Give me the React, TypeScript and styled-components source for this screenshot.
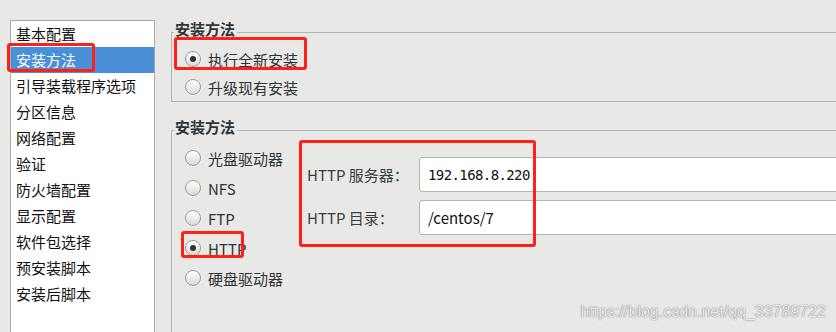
import React from "react";
import styled, { createGlobalStyle } from "styled-components";

const FONT = `"Noto Sans CJK SC", "Noto Sans", sans-serif`;

const GlobalStyle = createGlobalStyle`
  html, body {
    margin: 0;
    padding: 0;
    background: #e8e8e7;
  }
  body {
    font-family: ${FONT};
  }
`;

const Window = styled.div`
  position: relative;
  display: flex;
  align-items: flex-start;
  width: 836px;
  height: 332px;
  overflow: hidden;
  background: #e8e8e7;
  color: #2e3436;
  font-family: ${FONT};
  font-size: 15px;
`;

const Sidebar = styled.ul`
  flex: 0 0 145px;
  box-sizing: border-box;
  height: 330px;
  margin: 20px 0 0 10px;
  padding: 0;
  list-style: none;
  background: #fff;
  border: 1px solid #a9a9a9;
`;

const NavItem = styled.li<{ $active?: boolean }>`
  position: relative;
  height: 26px;
  line-height: 26px;
  padding-left: 5px;
  white-space: nowrap;
  color: ${(p) => (p.$active ? "#fff" : "#111")};
  background: ${(p) => (p.$active ? "#4a90d9" : "transparent")};
`;

const Main = styled.div`
  flex: 1;
  display: flex;
  flex-direction: column;
  gap: 16px;
  margin: 20px -40px 0 16px;
`;

const Frame = styled.fieldset<{ $height?: number }>`
  margin: 0;
  padding: 0;
  min-width: 0;
  border: 1px solid #b4b4b4;
  ${(p) => (p.$height ? `height: ${p.$height}px;` : "")}
`;

const FrameTitle = styled.legend`
  margin-left: 2px;
  padding: 0 2px 6px 1px;
  line-height: 18px;
  font-size: 15px;
  font-weight: bold;
  color: #2e3436;
`;

const ChoiceList = styled.div<{ $width?: number }>`
  display: flex;
  flex-direction: column;
  padding-top: 1px;
  ${(p) => (p.$width ? `flex: 0 0 ${p.$width}px;` : "")}
`;

const Choice = styled.label<{ $h: number }>`
  position: relative;
  display: flex;
  align-items: center;
  gap: 7px;
  height: ${(p) => p.$h}px;
  padding-left: 13px;
  white-space: nowrap;
  color: #2e3436;
`;

const RadioDot = styled.span<{ $on?: boolean }>`
  box-sizing: border-box;
  display: flex;
  align-items: center;
  justify-content: center;
  width: 16px;
  height: 16px;
  border-radius: 50%;
  border: 1px solid #9a9a9a;
  background: linear-gradient(#ffffff, #dadada);
  box-shadow: inset 0 1px 0 #fff, 0 1px 0 rgba(255, 255, 255, 0.6);
  &::after {
    content: "";
    display: ${(p) => (p.$on ? "block" : "none")};
    width: 6px;
    height: 6px;
    border-radius: 50%;
    background: #2e3436;
  }
`;

const FrameBody = styled.div`
  display: flex;
  align-items: flex-start;
`;

const Form = styled.div`
  position: relative;
  flex: 1;
  display: grid;
  grid-template-columns: 112px 1fr;
  row-gap: 8px;
  align-items: center;
  margin-top: 15px;
`;

const FieldLabel = styled.span`
  color: #3a3d3e;
  white-space: nowrap;
`;

const Field = styled.div<{ $mono?: boolean }>`
  box-sizing: border-box;
  display: flex;
  align-items: center;
  height: 35px;
  padding-left: 8px;
  background: #fff;
  border: 1px solid #b5b5b5;
  border-radius: 3px;
  color: #111;
  font-family: ${(p) => (p.$mono ? `"DejaVu Sans Mono", monospace` : FONT)};
  font-size: ${(p) => (p.$mono ? "14px" : "15px")};
  letter-spacing: ${(p) => (p.$mono ? "-0.6px" : "normal")};
`;

const Mark = styled.span<{ $l: number; $t: number; $w: number; $h: number }>`
  position: absolute;
  left: ${(p) => p.$l}px;
  top: ${(p) => p.$t}px;
  width: ${(p) => p.$w}px;
  height: ${(p) => p.$h}px;
  box-sizing: border-box;
  border: 3px solid #ff2119;
  border-radius: 3px;
  pointer-events: none;
`;

const Watermark = styled.div`
  position: absolute;
  right: 10px;
  bottom: 11px;
  font-family: "Liberation Sans", Arial, sans-serif;
  font-size: 16px;
  line-height: 18px;
  color: rgba(255, 255, 255, 0.85);
  text-shadow: 0 0 1px rgba(0, 0, 0, 0.5), 0 0 2px rgba(0, 0, 0, 0.2);
`;

const navItems = [
  "基本配置",
  "安装方法",
  "引导装载程序选项",
  "分区信息",
  "网络配置",
  "验证",
  "防火墙配置",
  "显示配置",
  "软件包选择",
  "预安装脚本",
  "安装后脚本",
];

const sources = ["光盘驱动器", "NFS", "FTP", "HTTP", "硬盘驱动器"];

export default function App() {
  return (
    <>
      <GlobalStyle />
      <Window>
        <Sidebar>
          {navItems.map((item, i) => (
            <NavItem key={item} $active={i === 1}>
              {item}
              {i === 1 && <Mark $l={-4} $t={-4} $w={88} $h={29} />}
            </NavItem>
          ))}
        </Sidebar>

        <Main>
          <Frame>
            <FrameTitle>安装方法</FrameTitle>
            <ChoiceList>
              <Choice $h={28}>
                <RadioDot $on />
                执行全新安装
                <Mark $l={2} $t={-8} $w={133} $h={33} />
              </Choice>
              <Choice $h={28}>
                <RadioDot />
                升级现有安装
              </Choice>
            </ChoiceList>
          </Frame>

          <Frame $height={260}>
            <FrameTitle>安装方法</FrameTitle>
            <FrameBody>
              <ChoiceList $width={135}>
                {sources.map((s) => (
                  <Choice key={s} $h={30}>
                    <RadioDot $on={s === "HTTP"} />
                    {s}
                    {s === "HTTP" && <Mark $l={9} $t={-2} $w={63} $h={27} />}
                  </Choice>
                ))}
              </ChoiceList>
              <Form>
                <FieldLabel>HTTP 服务器：</FieldLabel>
                <Field $mono>192.168.8.220</Field>
                <FieldLabel>HTTP 目录：</FieldLabel>
                <Field>/centos/7</Field>
                <Mark $l={-8} $t={-17} $w={237} $h={107} />
              </Form>
            </FrameBody>
          </Frame>
        </Main>

        <Watermark>https://blog.csdn.net/qq_33789722</Watermark>
      </Window>
    </>
  );
}
